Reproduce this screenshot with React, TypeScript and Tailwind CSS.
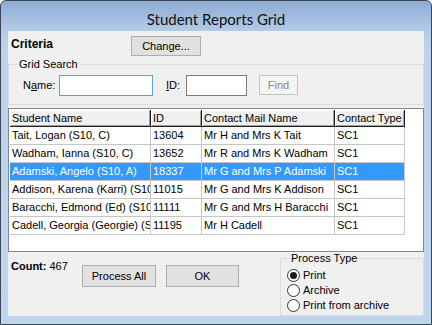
import React from "react";

const rows: string[][] = [
  ["Tait, Logan (S10, C)", "13604", "Mr H and Mrs K Tait", "SC1"],
  ["Wadham, Ianna (S10, C)", "13652", "Mr R and Mrs K Wadham", "SC1"],
  ["Adamski, Angelo (S10, A)", "18337", "Mr G and Mrs P Adamski", "SC1"],
  ["Addison, Karena (Karri) (S10, C)", "11015", "Mr G and Mrs K Addison", "SC1"],
  ["Baracchi, Edmond (Ed) (S10, C)", "11111", "Mr G and Mrs H Baracchi", "SC1"],
  ["Cadell, Georgia (Georgie) (S10, C)", "11195", "Mr H Cadell", "SC1"],
];

const colW = ["w-[141px]", "w-[51px]", "w-[133px]", "w-[70px]"];
const headers = ["Student Name", "ID", "Contact Mail Name", "Contact Type"];

function Radio({ checked, label }: { checked?: boolean; label: string }) {
  return (
    <div className="flex items-center h-[14px]">
      <div className="w-[13px] h-[13px] rounded-full border border-[#333333] bg-white flex items-center justify-center">
        {checked && <div className="w-[7px] h-[7px] rounded-full bg-[#1a1a1a]" />}
      </div>
      <span className="ml-[3px] leading-[13px]">{label}</span>
    </div>
  );
}

export default function App() {
  return (
    <div className="w-[432px] h-[325px] border border-[#3a4657] rounded-t-[6px] bg-[linear-gradient(180deg,#8eacd3_0px,#b3cbe7_30px,#bdd3ec_45px,#bfd5ee_100%)] flex flex-col px-[7px] pb-[8px] font-['Liberation_Sans',Arial,sans-serif] text-[11px] text-black overflow-hidden">
      <div className="h-[30px] pt-[9px] text-center font-['Lato',sans-serif] text-[15px] leading-[18px] text-[#111]">
        Student Reports Grid
      </div>
      <div className="flex-1 bg-[#f0f0f0] flex flex-col">
        {/* Criteria row */}
        <div className="flex items-center pt-[5px] h-[25px]">
          <div className="w-[123px] pl-[3px] mb-[4px] font-bold text-[12px] leading-[14px]">Criteria</div>
          <div className="w-[70px] h-[20px] border border-[#adadad] bg-[#e1e1e1] flex items-center justify-center leading-[13px]">
            Change...
          </div>
        </div>

        {/* Grid Search group */}
        <div className="relative mt-[8px] h-[41px] border border-[#dcdcdc] flex items-center pl-[14px] pt-[1px]">
          <div className="absolute -top-[7px] left-[9px] bg-[#f0f0f0] px-[1px] leading-[13px]">Grid Search</div>
          <div className="w-[36px] leading-[13px]">
            N<span className="underline">a</span>me:
          </div>
          <div className="w-[94px] h-[21px] border border-[#5aa0e6] bg-white" />
          <div className="ml-[13px] w-[20px] leading-[13px]">
            <span className="underline">I</span>D:
          </div>
          <div className="w-[61px] h-[21px] border border-[#7a7a7a] bg-white" />
          <div className="ml-[12px] w-[39px] h-[20px] border border-[#c4c4c4] bg-[#f4f4f4] text-[#8a8a8a] flex items-center justify-center leading-[13px]">
            Find
          </div>
        </div>

        {/* Grid */}
        <div className="mt-[3px] h-[144px] border border-[#828790] bg-white pt-[1px] pl-[1px] overflow-hidden">
          <div className="flex h-[17px]">
            {headers.map((h, i) => (
              <div
                key={h}
                className={`${colW[i]} h-[17px] shrink-0 bg-[#f0f0f0] border-r border-b border-[#1e1e1e] shadow-[inset_1px_1px_0_#ffffff,inset_-1px_-1px_0_#a0a0a0] pl-[2px] leading-[16px] whitespace-nowrap overflow-hidden`}
              >
                {h}
              </div>
            ))}
          </div>
          {rows.map((r, ri) => {
            const sel = ri === 2;
            return (
              <div key={ri} className="flex h-[18px]">
                {r.map((c, ci) => (
                  <div
                    key={ci}
                    className={`${colW[ci]} h-[18px] shrink-0 border-r border-b border-[#c6c6c6] pl-[2px] leading-[17px] whitespace-nowrap overflow-hidden ${
                      sel ? "bg-[#3399ff] text-white" : ""
                    }`}
                  >
                    {c}
                  </div>
                ))}
              </div>
            );
          })}
        </div>

        {/* Bottom */}
        <div className="flex flex-1 items-start">
          <div className="ml-[3px] mt-[8px] w-[71px] leading-[13px] whitespace-nowrap">
            <span className="font-bold">Count:</span> 467
          </div>
          <div className="mt-[13px] w-[74px] h-[22px] border border-[#adadad] bg-[#e1e1e1] flex items-center justify-center leading-[13px]">
            Process All
          </div>
          <div className="mt-[13px] ml-[10px] w-[73px] h-[22px] border border-[#adadad] bg-[#e1e1e1] flex items-center justify-center leading-[13px]">
            OK
          </div>
          <div className="relative mt-[6px] ml-[41px] w-[144px] h-[58px] border border-[#dcdcdc] pl-[6px] pt-[9px] flex flex-col gap-[1px]">
            <div className="absolute -top-[7px] left-[9px] bg-[#f0f0f0] px-[1px] leading-[13px]">Process Type</div>
            <Radio checked label="Print" />
            <Radio label="Archive" />
            <Radio label="Print from archive" />
          </div>
        </div>
      </div>
    </div>
  );
}
